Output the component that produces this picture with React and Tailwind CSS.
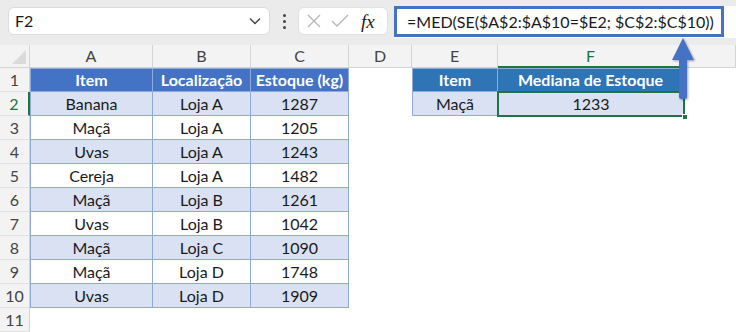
import React from 'react';

const cols = ['A', 'B', 'C', 'D', 'E', 'F', ''];

const rows = [
    ['Banana', 'Loja A', '1287'],
    ['Maçã', 'Loja A', '1205'],
    ['Uvas', 'Loja A', '1243'],
    ['Cereja', 'Loja A', '1482'],
    ['Maçã', 'Loja B', '1261'],
    ['Uvas', 'Loja B', '1042'],
    ['Maçã', 'Loja C', '1090'],
    ['Maçã', 'Loja D', '1748'],
    ['Uvas', 'Loja D', '1909'],
];

const gridCols = 'grid grid-cols-[30px_123px_98px_98px_63px_86px_186px_1fr]';

function RowHeader({ n, active }) {
    return (
        <div className={`h-6 flex items-center justify-center bg-[#f3f3f3] border-b border-[#e1e1e1] ${active ? 'text-[#217346] border-r-2 border-r-[#217346]' : 'text-[#444] border-r border-r-[#d4d4d4]'}`}>
            {n}
        </div>
    );
}

function Cell({ children, band, first, top, className = '' }) {
    return (
        <div className={`h-6 flex items-center justify-center border-r border-b border-[#8eaadb] ${band ? 'bg-[#d9e1f2]' : 'bg-white'} ${first ? 'border-l' : ''} ${top ? 'border-t' : ''} ${className}`}>
            {children}
        </div>
    );
}

export default function App() {
    return (
        <div className="relative w-[736px] h-[332px] overflow-hidden bg-white text-[16px] text-[#1a1a1a]" style={{ fontFamily: 'Lato, "Open Sans", sans-serif' }}>
            {/* Formula bar */}
            <div className="h-[45px] bg-[#ebebeb] flex items-start pt-[7px] pl-2">
                <div className="w-[262px] h-[28px] bg-white rounded-md border border-[#dcdcdc] flex items-center justify-between pl-[6px] pr-[8px]">
                    <span>F2</span>
                    <svg width="12" height="8" viewBox="0 0 12 8"><path d="M1 1.5 L6 6.5 L11 1.5" fill="none" stroke="#444" strokeWidth="1.4" /></svg>
                </div>
                <div className="w-[28px] h-[28px] flex flex-col items-center justify-center gap-[3px]">
                    <span className="w-[3px] h-[3px] bg-[#444] rounded-full" />
                    <span className="w-[3px] h-[3px] bg-[#444] rounded-full" />
                    <span className="w-[3px] h-[3px] bg-[#444] rounded-full" />
                </div>
                <div className="w-[90px] h-[28px] bg-white rounded-md border border-[#e0e0e0] flex items-center pl-[8px] gap-[10px]">
                    <svg width="14" height="14" viewBox="0 0 14 14"><path d="M1 1 L13 13 M13 1 L1 13" stroke="#b5b5b5" strokeWidth="1.3" /></svg>
                    <svg width="18" height="14" viewBox="0 0 18 14"><path d="M1 7 L6 12 L17 1" fill="none" stroke="#b5b5b5" strokeWidth="1.3" /></svg>
                    <span className="italic text-[19px] text-[#222] leading-none ml-[2px]" style={{ fontFamily: '"Liberation Serif", serif' }}>fx</span>
                </div>
                <div className="flex-1 h-[32px] -mt-[1px] ml-[6px] bg-white flex items-start">
                    <div className="w-[330px] h-[31px] border-[3px] border-[#4472c4] bg-white flex items-center pl-[10px] whitespace-nowrap overflow-hidden">
                        =MED(SE($A$2:$A$10=$E2; $C$2:$C$10))
                    </div>
                </div>
            </div>

            {/* Sheet */}
            <div className={gridCols}>
                <div className="h-[23px] bg-[#f3f3f3] border-r border-b border-[#d4d4d4] relative">
                    <svg className="absolute right-[3px] bottom-[3px]" width="14" height="14" viewBox="0 0 14 14"><path d="M14 0 L14 14 L0 14 Z" fill="#dadada" /></svg>
                </div>
                {cols.map((c, i) => (
                    <div key={i} className={`h-[23px] bg-[#f3f3f3] flex items-center justify-center border-r border-[#d4d4d4] ${c === 'F' ? 'text-[#217346] border-b-2 border-b-[#217346]' : 'text-[#444] border-b border-b-[#d4d4d4]'}`}>
                        {c}
                    </div>
                ))}

                {/* row 1 */}
                <RowHeader n={1} />
                <Cell first top className="bg-[#4472c4]! text-white font-bold">Item</Cell>
                <Cell top className="bg-[#4472c4]! text-white font-bold">Localização</Cell>
                <Cell top className="bg-[#4472c4]! text-white font-bold">Estoque (kg)</Cell>
                <div className="h-6" />
                <Cell first top className="bg-[#2f75b5]! text-white font-bold">Item</Cell>
                <Cell top className="bg-[#2f75b5]! text-white font-bold">Mediana de Estoque</Cell>
                <div className="h-6" />

                {rows.map((r, i) => (
                    <React.Fragment key={i}>
                        <RowHeader n={i + 2} active={i === 0} />
                        <Cell first band={i % 2 === 0}>{r[0]}</Cell>
                        <Cell band={i % 2 === 0}>{r[1]}</Cell>
                        <Cell band={i % 2 === 0}>{r[2]}</Cell>
                        <div className="h-6" />
                        {i === 0 ? (
                            <>
                                <Cell first band>Maçã</Cell>
                                <div className="h-6 relative bg-[#d9e1f2] flex items-center justify-center">
                                    1233
                                    <div className="absolute -left-px -top-px -right-px -bottom-px border-2 border-[#217346]" />
                                    <div className="absolute -right-[4px] -bottom-[4px] w-[6px] h-[6px] bg-[#217346] border border-white" />
                                </div>
                            </>
                        ) : (
                            <>
                                <div className="h-6" />
                                <div className="h-6" />
                            </>
                        )}
                        <div className="h-6" />
                    </React.Fragment>
                ))}
                <RowHeader n={11} />
            </div>

            {/* Arrow */}
            <svg className="absolute left-[670px] top-[36px]" width="28" height="68" viewBox="0 0 28 68">
                <defs>
                    <filter id="sh" x="-50%" y="-20%" width="200%" height="150%">
                        <feDropShadow dx="1" dy="1" stdDeviation="1" floodColor="#000" floodOpacity="0.35" />
                    </filter>
                </defs>
                <g filter="url(#sh)">
                    <path d="M13 2 L24 24 L17 24 L17 61 Q17 63 15 63 L11 63 Q9 63 9 61 L9 24 L2 24 Z" fill="#4472c4" />
                </g>
            </svg>
        </div>
    );
}
